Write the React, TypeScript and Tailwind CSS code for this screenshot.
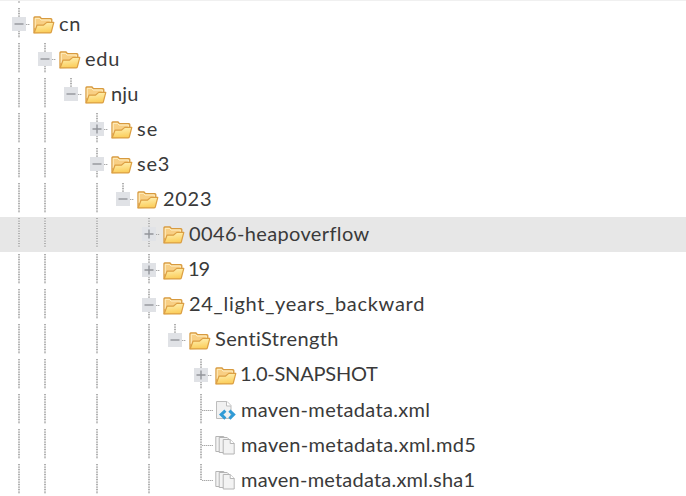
import React from "react";

type Kind = "open" | "closed" | "xml" | "file";
type Item = { label: string; depth: number; kind: Kind; guides: number[]; half?: boolean; selected?: boolean; tracking: string };

const items: Item[] = [
  { label: "cn", depth: 0, kind: "open", guides: [0], tracking: "tracking-[0.7px]" },
  { label: "edu", depth: 1, kind: "open", guides: [0, 1], tracking: "tracking-[0.8px]" },
  { label: "nju", depth: 2, kind: "open", guides: [0, 1, 2], half: true, tracking: "tracking-[0.1px]" },
  { label: "se", depth: 3, kind: "closed", guides: [0, 1, 3], tracking: "tracking-[1px]" },
  { label: "se3", depth: 3, kind: "open", guides: [0, 1, 3], tracking: "tracking-[0.8px]" },
  { label: "2023", depth: 4, kind: "open", guides: [0, 1, 3, 4], half: true, tracking: "tracking-[0.7px]" },
  { label: "0046-heapoverflow", depth: 5, kind: "closed", guides: [0, 1, 3, 5], selected: true, tracking: "tracking-[0.37px]" },
  { label: "19", depth: 5, kind: "closed", guides: [0, 1, 3, 5], tracking: "-mt-px -ml-px tracking-[-1.2px]" },
  { label: "24_light_years_backward", depth: 5, kind: "open", guides: [0, 1, 3, 5], tracking: "-mt-px tracking-[0.71px]" },
  { label: "SentiStrength", depth: 6, kind: "open", guides: [0, 1, 3, 5, 6], half: true, tracking: "-mt-px tracking-[0.35px]" },
  { label: "1.0-SNAPSHOT", depth: 7, kind: "closed", guides: [0, 1, 3, 5, 7], tracking: "-mt-px -ml-px tracking-[-0.22px]" },
  { label: "maven-metadata.xml", depth: 7, kind: "xml", guides: [0, 1, 3, 5, 7], tracking: "tracking-[0.33px]" },
  { label: "maven-metadata.xml.md5", depth: 7, kind: "file", guides: [0, 1, 3, 5, 7], tracking: "tracking-[0.36px]" },
  { label: "maven-metadata.xml.sha1", depth: 7, kind: "file", guides: [0, 1, 3, 5, 7], half: true, tracking: "tracking-[0.21px]" },
];

function Folder() {
  return (
    <svg width="22" height="18" viewBox="0 0 22 18" className="shrink-0">
      <defs>
        <linearGradient id="front" x1="0" y1="0" x2="0.2" y2="1">
          <stop offset="0" stopColor="#fff3b8" />
          <stop offset="1" stopColor="#fbce5c" />
        </linearGradient>
      </defs>
      <path d="M1 16.5V1.7Q1 1 1.7 1H7l1.5 1.6h9.3q1 0 1 1v3.4l-3 9z" fill="#f8cf84" stroke="#d79a3f" strokeWidth="1.3" />
      <path d="M2.2 12V2.3h4.3L8 4h9.3v2" fill="none" stroke="#fff0c4" />
      <path d="M1.2 16.9 4 9.2h6.3L13.8 6.4h7L18.3 16q-.3.9-1.3.9z" fill="url(#front)" stroke="#dc9f43" strokeWidth="1.2" strokeLinejoin="round" />
    </svg>
  );
}

function XmlFile() {
  return (
    <svg width="22" height="21" viewBox="0 0 22 21" className="shrink-0">
      <path d="M1.5 1.5h10.5l4 4v13H1.5z" fill="#f1f1f1" stroke="#bdbdbd" />
      <path d="M11.5 1.5v4.5h4.5" fill="#fff" stroke="#bdbdbd" />
      <path d="M10.4 10.6 6.2 14.6l4.2 4M14.4 10.6l4.2 4-4.2 4" fill="none" stroke="#319bd6" strokeWidth="3" />
    </svg>
  );
}

function Files() {
  return (
    <svg width="22" height="21" viewBox="0 0 22 21" className="shrink-0" fill="#f3f3f3" stroke="#b4b4b4">
      <path d="M.8 1.5h8l3 3v12h-11z" />
      <path d="M4.2 2.5h8l3 3v12h-11z" />
      <path d="M8.2 4.5h7l4 4v10.5h-11z" />
      <path d="M15.2 4.5v4h4" fill="#fff" />
    </svg>
  );
}

function Guide({ shown, half }: { shown: boolean; half: boolean }) {
  return (
    <span className="flex h-full w-[26px] shrink-0 justify-center pt-px">
      {shown && (
        <span
          className={`w-[2px] bg-[repeating-linear-gradient(#b0b0b0_0_1px,#e4e4e4_1px_2px,#d3d3d3_2px_3px,#c2c2c2_3px_4px,#eaeaea_4px_5px)] ${half ? "h-[16px]" : "h-[30px]"}`}
        />
      )}
    </span>
  );
}

function Row({ item }: { item: Item }) {
  const { depth, kind, guides, half, selected, label, tracking } = item;
  const folder = kind === "open" || kind === "closed";
  return (
    <div className={`flex h-[35px] items-start pl-[6px] ${selected ? "mb-px bg-[#e7e7e7]" : ""}`}>
      {Array.from({ length: depth + 1 }, (_, i) => (
        <Guide key={i} shown={guides.includes(i)} half={!!half && i === depth} />
      ))}
      <span className={`z-10 flex h-[34px] shrink-0 items-center ${folder ? "-ml-[20px] w-[21px]" : "-ml-[12px] w-[13px]"}`}>
        {folder && (
          <svg width="14" height="14" viewBox="0 0 14 14" className="shrink-0">
            <path d="M0 0h14v14H0z" fill={selected ? "#e1e3e7" : "#e0e2e6"} />
            <path d={kind === "closed" ? "M2.5 7h9M7 2.5v9" : "M2.5 7h9"} stroke="#92959a" strokeWidth="1.4" />
          </svg>
        )}
        <span className={`h-px bg-[repeating-linear-gradient(90deg,#a9a9a9_0_1px,#dddddd_1px_2px)] ${folder ? "w-[4px]" : "w-[11px]"}`} />
      </span>
      <span className="flex h-[35px] w-[26px] shrink-0 items-center">
        {folder ? <Folder /> : kind === "xml" ? <XmlFile /> : <Files />}
      </span>
      <span className={`h-[35px] whitespace-nowrap text-[20px] leading-[33px] [font-variant-ligatures:none] ${tracking}`}>{label}</span>
    </div>
  );
}

export default function App() {
  return (
    <main className="h-[496px] w-[686px] overflow-hidden bg-white font-['Lato',sans-serif] text-[#3a3a3a]">
      <div className="h-[7px] border-t border-[#f0f0f0] pl-[18px]">
        <div className="h-[2px] w-[2px] bg-[#cccccc]" />
      </div>
      {items.map((item) => (
        <Row key={item.label} item={item} />
      ))}
    </main>
  );
}
